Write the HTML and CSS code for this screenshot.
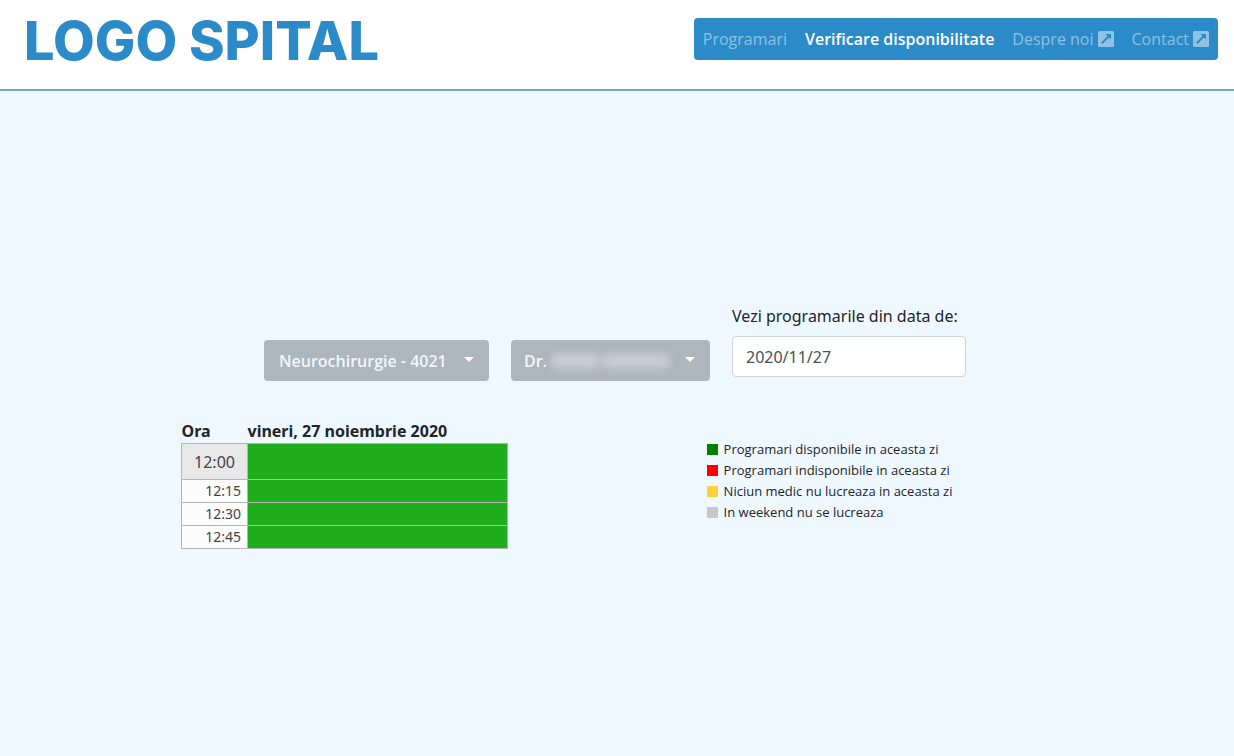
FILE: index.html
```html
<!DOCTYPE html>
<html lang="ro">
<head>
    <meta charset="UTF-8">
    <meta name="viewport" content="width=device-width, initial-scale=1">
    <title>Verificare disponibilitate</title>
    <link rel="stylesheet" href="styles.css">
</head>
<body>
<header class="header">
    <a class="logo" href="#">LOGO SPITAL</a>
    <nav class="nav">
        <a href="#">Programari</a>
        <a href="#" class="active">Verificare disponibilitate</a>
        <a href="#">Despre noi
            <svg class="icon" viewBox="0 0 16 16" aria-hidden="true"><path fill="currentColor" fill-rule="evenodd" d="M1.500 0h13A1.500 1.500 0 0 1 16 1.500v13a1.500 1.500 0 0 1-1.500 1.500h-13A1.500 1.500 0 0 1 0 14.500v-13A1.500 1.500 0 0 1 1.500 0zM7.500 3l2 2L3 11.700 4.300 13 11 6.500l2 2V3z"/></svg>
        </a>
        <a href="#">Contact
            <svg class="icon" viewBox="0 0 16 16" aria-hidden="true"><path fill="currentColor" fill-rule="evenodd" d="M1.500 0h13A1.500 1.500 0 0 1 16 1.500v13a1.500 1.500 0 0 1-1.500 1.500h-13A1.500 1.500 0 0 1 0 14.500v-13A1.500 1.500 0 0 1 1.500 0zM7.500 3l2 2L3 11.700 4.300 13 11 6.500l2 2V3z"/></svg>
        </a>
    </nav>
</header>
<main class="main">
    <form class="filters">
        <div class="dropdown">
            <select class="sectie" aria-label="Sectie">
                <option>Neurochirurgie - 4021</option>
            </select>
        </div>
        <div class="dropdown">
            <select class="medic" aria-label="Medic">
                <option>Dr.</option>
            </select>
            <!-- numele medicului este ascuns -->
            <span class="hidden-name"><i></i><i></i></span>
        </div>
        <div class="date">
            <label for="data">Vezi programarile din data de:</label>
            <input type="text" id="data" value="2020/11/27">
        </div>
    </form>
    <div class="content">
        <table class="schedule">
            <thead>
            <tr><th class="hour">Ora</th><th>vineri, 27 noiembrie 2020</th></tr>
            </thead>
            <tbody>
            <tr class="full"><td>12:00</td><td class="free"></td></tr>
            <tr><td>12:15</td><td class="free"></td></tr>
            <tr><td>12:30</td><td class="free"></td></tr>
            <tr><td>12:45</td><td class="free"></td></tr>
            </tbody>
        </table>
        <ul class="legend">
            <li class="green">Programari disponibile in aceasta zi</li>
            <li class="red">Programari indisponibile in aceasta zi</li>
            <li class="yellow">Niciun medic nu lucreaza in aceasta zi</li>
            <li class="grey">In weekend nu se lucreaza</li>
        </ul>
    </div>
</main>
</body>
</html>
```
FILE: styles.css
```css
* {
    box-sizing: border-box;
    margin: 0;
    padding: 0;
}

body {
    display: flex;
    flex-direction: column;
    min-height: 100vh;
    font-family: "Noto Sans", "Open Sans", sans-serif;
    font-size: 16px;
    color: #212529;
    background: #f0f8ff;
}

.header {
    display: flex;
    justify-content: space-between;
    align-items: flex-start;
    min-height: 91px;
    padding: 18px 16px 0 24px;
    background: #fff;
    border-bottom: 2px solid #67aad8;
}

.logo {
    font-family: Inter, sans-serif;
    font-size: 54px;
    line-height: 46px;
    font-weight: 800;
    color: #2b8bc8;
    text-decoration: none;
}

.nav {
    display: flex;
    gap: 18px;
    padding: 0 9px;
    font-family: "Open Sans", "Noto Sans", sans-serif;
    line-height: 42px;
    background: #2b8bc8;
    border-radius: 4px;
}

.nav a {
    display: flex;
    align-items: center;
    gap: 4px;
    color: #8fc2e4;
    text-decoration: none;
}

.nav a.active {
    font-weight: 600;
    color: #fff;
}

.icon {
    width: 16px;
    height: 16px;
}

.main {
    flex: 1;
    display: flex;
    flex-direction: column;
    justify-content: center;
    padding-top: 6px;
}

.filters {
    display: flex;
    justify-content: center;
    align-items: flex-end;
    gap: 22px;
    padding-right: 4px;
}

.dropdown {
    position: relative;
}

.dropdown select {
    display: block;
    height: 41px;
    padding: 0 15px;
    border: 0;
    border-radius: 4px;
    appearance: none;
    font: 600 16px "Open Sans", "Noto Sans", sans-serif;
    color: #f0f8ff;
    background: #adb5bd;
}

.dropdown .sectie {
    width: 225px;
}

.dropdown .medic {
    width: 199px;
    padding-left: 13px;
}

.dropdown::after {
    content: "";
    position: absolute;
    top: 17px;
    right: 15px;
    border: 5px solid transparent;
    border-top-color: #fff;
    border-bottom: 0;
    pointer-events: none;
}

.hidden-name {
    position: absolute;
    top: 14px;
    left: 41px;
    display: flex;
    gap: 5px;
    filter: blur(4px);
    pointer-events: none;
}

.hidden-name i {
    width: 46px;
    height: 14px;
    background: #c8d0d8;
}

.hidden-name i + i {
    width: 66px;
}

.date {
    width: 234px;
    margin-bottom: 4px;
}

.date label {
    display: block;
    margin-bottom: 8px;
    line-height: 24px;
    white-space: nowrap;
}

.date input {
    display: block;
    width: 100%;
    height: 41px;
    padding: 0 13px;
    border: 1px solid #ced4da;
    border-radius: 4px;
    font: 16px "Noto Sans", "Open Sans", sans-serif;
    color: #495057;
    background: #fff;
}

.content {
    display: grid;
    grid-template-columns: 3fr 2fr;
    gap: 6px;
    width: 100%;
    max-width: 872px;
    margin: 38px auto 0;
}

.schedule {
    width: 327px;
    table-layout: fixed;
    border-collapse: collapse;
}

.schedule th {
    height: 24px;
    line-height: 24px;
    text-align: left;
    white-space: nowrap;
}

.schedule .hour {
    width: 66px;
}

.schedule td {
    height: 23px;
    padding-right: 6px;
    border: 1px solid #b5b5b5;
    font-size: 14px;
    line-height: 20px;
    text-align: right;
    color: #444;
    background: #fcfcfc;
}

.schedule .full td {
    height: 36px;
    padding: 0;
    font-size: 16px;
    text-align: center;
    background: #e8e8e8;
}

.schedule td.free,
.schedule .full td.free {
    background: #1fad1c;
}

.legend {
    list-style: none;
    padding-top: 20px;
    font-family: "Open Sans", "Noto Sans", sans-serif;
    font-size: 13px;
    line-height: 21px;
    white-space: nowrap;
}

.legend li {
    display: flex;
    align-items: center;
    gap: 6px;
}

.legend li::before {
    content: "";
    width: 11px;
    height: 11px;
}

.legend .green::before {
    background: #008000;
}

.legend .red::before {
    background: #f00;
}

.legend .yellow::before {
    background: #ffd137;
}

.legend .grey::before {
    background: #c8c8c8;
}
```
